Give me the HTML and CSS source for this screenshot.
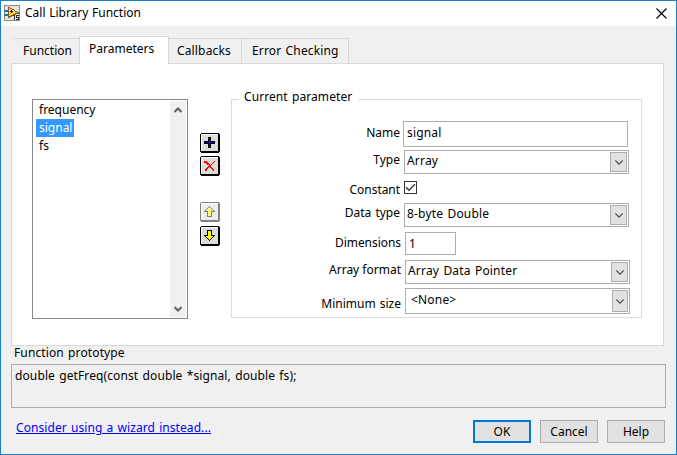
FILE: index.html
```html
<!DOCTYPE html>
<html lang="en">
<head>
<meta charset="utf-8">
<title>Call Library Function</title>
<link rel="stylesheet" href="styles.css">
</head>
<body>
<div class="window">
  <header class="titlebar">
    <svg class="app-icon" width="16" height="16" viewBox="0 0 16 16" shape-rendering="crispEdges">
      <rect width="16" height="16" fill="#8b8b8b"/><rect x="1" y="1" width="14" height="14" fill="#e4e4e4"/>
      <path d="M0 5h5v2H0zM0 9h5v2H0zM11 7h5v2h-5z" fill="#1c73ad"/>
      <path d="M4 2h2v1h2v1h2v1h1v1h2v1h1v2h-2v1h-2v1H8v1H6v1H4z" fill="#8a5a16"/>
      <path d="M5 3h1v1h2v1h2v1h1v1h2v1h-2v1h-2v1H7v1H5z" fill="#ffc94b"/>
      <path d="M7 5h1v1h1v1H8v1H7V7H6V6h1z" fill="#222"/>
      <path d="M9 10h2v5h-1v-4H9zM12 10h3v1h-2v1h2v3h-3v-1h2v-1h-2z" fill="#333"/>
    </svg>
    <span class="title">Call Library Function</span>
    <svg class="close" width="11" height="11" viewBox="0 0 11 11"><path d="M.5.5l10 10M10.500.5l-10 10" stroke="#000" stroke-width="1.15"/></svg>
  </header>

  <nav class="tabs">
    <div class="tab tab-function"><span>Function</span></div>
    <div class="tab active"><span>Parameters</span></div>
    <div class="tab tab-callbacks"><span>Callbacks</span></div>
    <div class="tab tab-error"><span>Error Checking</span></div>
  </nav>

  <main class="panel">
    <div class="list">
      <ul class="items">
        <li><span>frequency</span></li>
        <li class="selected"><span>signal</span></li>
        <li><span>fs</span></li>
      </ul>
      <div class="scrollbar">
        <svg width="8" height="6" viewBox="0 0 8 6"><path d="M.5 5L4 1.500 7.500 5" fill="none" stroke="#606060" stroke-width="2"/></svg>
        <svg width="8" height="6" viewBox="0 0 8 6"><path d="M.5 1L4 4.500 7.500 1" fill="none" stroke="#606060" stroke-width="2"/></svg>
      </div>
    </div>

    <div class="tools">
      <svg class="tool" width="20" height="20" viewBox="0 0 20 20" shape-rendering="crispEdges">
        <path d="M1 0h18v1h1v18h-1v1H1v-1H0V1h1z"/><path d="M1 1h17v17H1z" fill="#fff"/><path d="M2 2h16v16H2z" fill="#dcdcdc"/>
        <path d="M8 4h3v4h4v3h-4v4H8v-4H4V8h4z"/><path d="M9 5h1v4h4v1h-4v4H9v-4H5V9h4z" fill="#00f"/>
      </svg>
      <svg class="tool" width="20" height="20" viewBox="0 0 20 20" shape-rendering="crispEdges">
        <path d="M1 0h18v1h1v18h-1v1H1v-1H0V1h1z"/><path d="M1 1h17v17H1z" fill="#fff"/><path d="M2 2h16v16H2z" fill="#dcdcdc"/>
        <path d="M4 5h3v1h1v1h1v1h1v1h1V8h1V7h1V6h1V5h1v1h-1v1h-1v1h-1v1h-1v2h1v1h1v1h1v2h-1v-1h-1v-1h-1v-1h-1v-1H9v1H8v1H7v2H5v-2h1v-1h1v-1h1v-1h1V9H7V8H6V7H4z" fill="#f00"/>
      </svg>
      <svg class="tool tool-up" width="20" height="20" viewBox="0 0 20 20" shape-rendering="crispEdges">
        <path d="M1 0h18v1h1v18h-1v1H1v-1H0V1h1z" fill="#808080"/><path d="M1 1h17v17H1z" fill="#fff"/><path d="M2 2h16v16H2z" fill="#ededed"/>
        <path d="M9 4h1v1h1v1h1v1h1v1h1v1h1v1h-3v5H7v-5H4V9h1V8h1V7h1V6h1V5h1z" fill="#808080"/>
        <path d="M9 5h1v1h1v1h1v1h1v1h-2v5H8V9H6V8h1V7h1V6h1z" fill="#ffff80"/>
      </svg>
      <svg class="tool" width="20" height="20" viewBox="0 0 20 20" shape-rendering="crispEdges">
        <path d="M1 0h18v1h1v18h-1v1H1v-1H0V1h1z"/><path d="M1 1h17v17H1z" fill="#fff"/><path d="M2 2h16v16H2z" fill="#dcdcdc"/>
        <path d="M7 4h5v5h3v1h-1v1h-1v1h-1v1h-1v1h-1v1H9v-1H8v-1H7v-1H6v-1H5v-1H4V9h3z"/>
        <path d="M8 5h3v5h2v1h-1v1h-1v1h-1v1H9v-1H8v-1H7v-1H6v-1h2z" fill="#ff0"/>
      </svg>
    </div>

    <section class="group">
      <h2 class="legend"><span>Current parameter</span></h2>
      <div class="form">
        <div class="row row-name"><label>Name</label><div class="field">signal</div></div>
        <div class="row"><label>Type</label><div class="field combo"><span>Array</span><i class="drop"><svg width="8" height="5" viewBox="0 0 8 5"><path d="M.3.500L4 4.200 7.700.500" fill="none" stroke="#505050" stroke-width="1.200"/></svg></i></div></div>
        <div class="row row-constant"><label>Constant</label><div class="check"><svg width="11" height="11" viewBox="0 0 11 11"><path d="M1 5.300l3 3L10 2.300" fill="none" stroke="#333" stroke-width="1.300"/></svg></div></div>
        <div class="row"><label>Data type</label><div class="field combo"><span>8-byte Double</span><i class="drop"><svg width="8" height="5" viewBox="0 0 8 5"><path d="M.3.500L4 4.200 7.700.500" fill="none" stroke="#505050" stroke-width="1.200"/></svg></i></div></div>
        <div class="row shifted row-dimensions"><label>Dimensions</label><div class="field">1</div></div>
        <div class="row shifted row-format"><label>Array format</label><div class="field combo"><span>Array Data Pointer</span><i class="drop"><svg width="8" height="5" viewBox="0 0 8 5"><path d="M.3.500L4 4.200 7.700.500" fill="none" stroke="#505050" stroke-width="1.200"/></svg></i></div></div>
        <div class="row shifted row-size"><label>Minimum size</label><div class="field combo"><span>&lt;None&gt;</span><i class="drop"><svg width="8" height="5" viewBox="0 0 8 5"><path d="M.3.500L4 4.200 7.700.500" fill="none" stroke="#505050" stroke-width="1.200"/></svg></i></div></div>
      </div>
    </section>
  </main>

  <div class="proto-label"><span>Function prototype</span></div>
  <div class="proto"><span>double getFreq(const double *signal, double fs);</span></div>
  <footer class="footer">
    <a class="link">Consider using a wizard instead...</a>
    <div class="buttons">
      <div class="btn primary">OK</div>
      <div class="btn">Cancel</div>
      <div class="btn">Help</div>
    </div>
  </footer>
</div>
</body>
</html>
```
FILE: styles.css
```css
* { box-sizing: border-box; }
html, body { margin: 0; padding: 0; }
body {
  width: 677px; height: 455px; overflow: hidden;
  font: 12px/18px "Noto Sans", "Open Sans", sans-serif;
  word-spacing: 1px;
  color: #000; white-space: nowrap;
}
svg { display: block; flex: none; }
.window {
  width: 677px; height: 455px; border: 1px solid #1a7fd1;
  background: #f0f0f0; display: flex; flex-direction: column;
}
.titlebar {
  height: 25px; flex: none; background: #fff;
  display: flex; align-items: flex-start; padding: 4px 9px 0 3px;
}
.title { margin: -1px auto 0 5px; word-spacing: 0.5px; }
.close { margin: 3px 0 0; }

.tabs { height: 37px; flex: none; display: flex; align-items: flex-end; padding-left: 12px; }
.tab {
  height: 25px; border-top: 1px solid #d9d9d9; border-right: 1px solid #d9d9d9;
  padding: 3px 0 0 10px;
}
.tab-function { width: 66px; border-right: 0; }
.tab-callbacks { width: 73px; padding-left: 8px; letter-spacing: 0.15px; }
.tab-error { width: 107px; letter-spacing: 0.15px; }
.tab.active {
  width: 90px; height: 28px; margin-bottom: -1px; padding-left: 9px;
  border-left: 1px solid #d9d9d9; background: #fff; z-index: 1;
}

.panel {
  width: 653px; height: 283px; flex: none; margin-left: 10px;
  border: 1px solid #d9d9d9; background: #fff;
  display: flex; align-items: flex-start; padding: 35px 0 0 20px;
}
.list {
  width: 156px; height: 220px; border: 1px solid #828790;
  display: flex; justify-content: space-between; padding: 1px;
}
.items { list-style: none; margin: 0; padding: 0 0 0 2px; }
.items li { height: 18px; padding: 0 0 0 3px; }
.items .selected { width: 38px; background: #3399ff; color: #fff; }
.scrollbar {
  width: 16px; margin-right: 0; background: #f0f0f0; display: flex; flex-direction: column;
  justify-content: space-between; align-items: center; padding: 6px 0 5px;
}
.tools { width: 20px; margin: 34px 0 0 12px; }
.tool { margin-bottom: 3px; }
.tool-up { margin: 26px 0 4px; }

.group { width: 411px; height: 219px; margin-left: 11px; border: 1px solid #dcdcdc; }
.legend {
  margin: -12px 0 0 7px; padding-left: 5px; width: 119px; height: 18px;
  background: #fff; font: inherit; letter-spacing: 0.08px;
}
.form { display: grid; grid-template-rows: 29px 31px 22px 29px 28px 28px 26px; padding-top: 15px; }
.row { display: flex; align-items: flex-start; }
label { width: 168px; margin: 1px 4px 0 0; text-align: right; }
.field {
  width: 225px; height: 24px; border: 1px solid #abadb3; background: #fff;
  padding: 1px 1px 0 2px; display: flex; justify-content: space-between;
  letter-spacing: 0.18px;
}
.row-name label { margin: 3px 3px 0 0; }
.row-name .field { height: 26px; padding: 2px 0 0 3px; }
.shifted label { width: 169px; }
.row-format label { word-spacing: 0; }
.drop {
  width: 17px; height: 20px; border: 1px solid #adadad; background: #e1e1e1;
  display: flex; align-items: center; justify-content: center;
}
.row-constant label { margin-top: 0; letter-spacing: -0.05px; }
.check { width: 13px; height: 13px; border: 1px solid #333; }
.row-dimensions label { margin-top: 2px; letter-spacing: -0.05px; }
.row-dimensions .field { width: 51px; height: 23px; padding: 2px 0 0 3px; }
.row-size label { margin-top: 7px; }
.row-size .field { height: 26px; padding-left: 5px; }
.row-size .field span { padding-top: 1px; }
.row-size .drop { width: 16px; height: 22px; }

.proto-label { height: 18px; flex: none; margin: -2px 0 0 13px; letter-spacing: 0.12px; }
.proto {
  width: 655px; height: 44px; flex: none; margin: 2px 0 0 10px;
  border: 1px solid #abadb3; padding: 2px 0 0 3px; letter-spacing: 0.11px;
}
.footer { display: flex; justify-content: space-between; padding: 12px 11px 0 15px; }
.link { color: #00f; text-decoration: underline; margin-top: -1px; letter-spacing: 0.07px; }
.buttons { display: flex; gap: 9px; }
.btn {
  width: 58px; height: 23px; border: 1px solid #adadad; background: #e1e1e1;
  text-align: center; line-height: 21px;
}
.btn.primary { border: 2px solid #0078d7; line-height: 19px; }
```
